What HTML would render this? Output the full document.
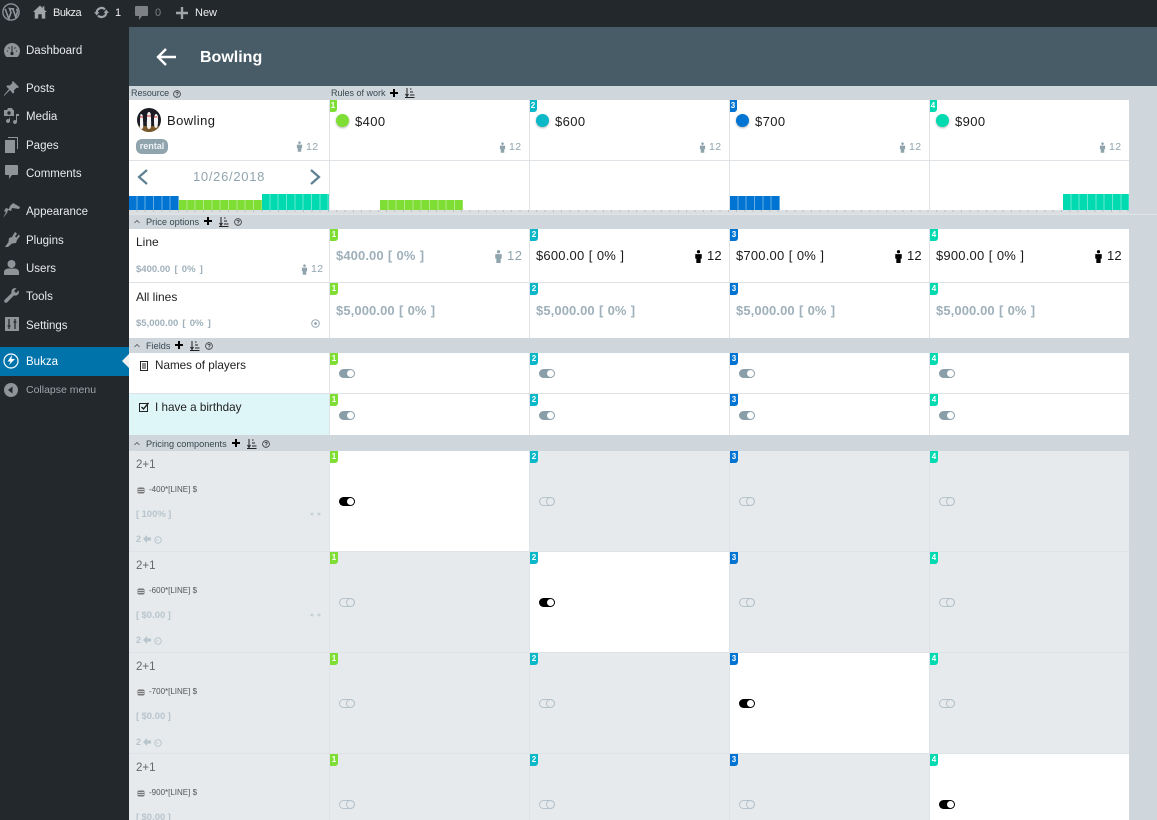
<!DOCTYPE html>
<html style="width:1157px;height:820px;overflow:hidden"><head><meta charset="utf-8"><title>Bowling</title>
<style>
html,body{margin:0;padding:0}
body{width:1157px;height:820px;overflow:hidden;position:relative;background:#cfd7dd;font-family:"Liberation Sans",sans-serif}
#p{left:0;top:0;width:1157px;height:820px;overflow:hidden;background:#cfd7dd}
div,span,svg{position:absolute}
.t{white-space:nowrap;line-height:16px;height:16px}
.w{background:#fff}.g{background:#e6eaed}
.m{color:#e8e9ea;font-size:11.500px;left:26px}
.a{color:#eee;font-size:11px;font-weight:400}
.s{font-size:9px;color:#37474f}
.b{width:8px;height:12px;color:#fff;font-size:8px;font-weight:bold;line-height:12px;text-align:center;border-bottom-right-radius:3px}
.c1{background:#7ede34}.c2{background:#0bb8c8}.c3{background:#0074d2}.c4{background:#00dab0}
.dot{width:13px;height:13px;border-radius:50%;box-shadow:0 1px 2px rgba(0,0,0,.3)}
.r{font-size:13px;color:#1a1a1a;letter-spacing:.4px}
.n{font-size:10.500px;color:#90a4ae;letter-spacing:.4px}
.pb{font-size:13px;font-weight:bold;color:#9fb0ba;letter-spacing:.1px;word-spacing:.5px}
.pk{font-size:13px;color:#1a1a1a;letter-spacing:.2px;word-spacing:.5px}
.vl{width:1px;background:#dfe3e7}
.hl{height:1px;background:#dfe3e7;left:129px;width:1000px}
.tog{width:16px;height:9px;border-radius:5px;background:#8a9ea9}
.tog:after{content:"";position:absolute;right:1px;top:1px;width:7px;height:7px;border-radius:50%;background:#fff}
.tb{background:#000}
.to{width:16px;height:9px;border-radius:5px;border:1px solid #b6c3ca;box-sizing:border-box}
.to:after{content:"";position:absolute;right:-1px;top:-1px;width:9px;height:9px;border-radius:50%;border:1px solid #b6c3ca;box-sizing:border-box}
.ch{background-image:repeating-linear-gradient(90deg,transparent 0,transparent 7.330px,rgba(255,255,255,.4) 7.330px,rgba(255,255,255,.4) 8.330px)}
.tick{left:129px;width:1000px;top:210px;height:4px;background-color:#dcdfe2;background-image:repeating-linear-gradient(90deg,transparent 0,transparent 7.330px,#b9bfc4 7.330px,#b9bfc4 8.330px);background-size:100% 2px;background-repeat:no-repeat}
.d2{font-size:8px;color:#555}
.pc{font-size:9.500px;font-weight:bold;color:#b8c5cc;word-spacing:-.3px}
.h{font-size:11.500px;color:#666}
</style></head><body><div id="p">
<svg width="0" height="0" style="left:0;top:0"><defs>
<symbol id="per" viewBox="0 0 8 12"><circle cx="4" cy="1.600" r="1.500"/><path d="M1 3.800h6v4.200H6V12H2V8H1z"/></symbol>
<symbol id="plus" viewBox="0 0 8 8"><path d="M3 0h2v3h3v2H5v3H3V5H0V3h3z"/></symbol>
<symbol id="sort" viewBox="0 0 10 10"><path d="M2 0v7M0.500 6l1.500 2.500L3.500 6M5 1h1.500M5 4h3M5 7h4.500M0 9.500h9.500" fill="none" stroke="#222" stroke-width="1"/></symbol>
<symbol id="q" viewBox="0 0 8 8"><circle cx="4" cy="4" r="3.400" fill="none" stroke="#333" stroke-width=".8"/><path d="M2.900 3.100C3 1.800 5.200 1.900 5.200 3.200 5.200 4 4 4 4 5" fill="none" stroke="#333" stroke-width=".8"/><circle cx="4" cy="6" r=".5" fill="#333"/></symbol>
<symbol id="ll" viewBox="0 0 8 7"><rect x=".5" y=".5" width="7" height="6" rx="1.500" fill="#777"/><path d="M1 2.500h6M1 4.500h6" stroke="#e6eaed" stroke-width=".7"/></symbol>
<symbol id="x" viewBox="0 0 11 6"><path d="M0 3l2.500-2v1.500H4v1H2.500V5zM11 3L8.500 1v1.500H7v1h1.500V5z" fill="#c3ced4"/></symbol>
<symbol id="la" viewBox="0 0 10 10"><path d="M5 0v3h5v4H5v3L0 5z" fill="#b8c5cc"/></symbol>
<symbol id="ck" viewBox="0 0 8 8"><circle cx="4" cy="4" r="3.300" fill="none" stroke="#b8c5cc"/><path d="M2 4h2.500" fill="none" stroke="#b8c5cc" stroke-width=".8"/></symbol>
</defs></svg>

<!-- Admin bar -->
<div style="left:0;top:0;width:1157px;height:27px;background:#23282d"></div>
<svg style="left:2px;top:3px" width="18" height="18" viewBox="0 0 20 20"><circle cx="10" cy="10" r="9" fill="none" stroke="#8f9499" stroke-width="1.500"/><path d="M3.500 6.500l4 11 2.500-7-1.700-4.500h-1M8 6.500h5.500M12 6.500l3.200 9 1.800-5c.7-2-.3-3-1-4" fill="none" stroke="#8f9499" stroke-width="1.800"/></svg>
<svg style="left:33px;top:5px" width="14" height="14" viewBox="0 0 16 15"><path d="M8 0L0 7.500h2V15h4v-5h4v5h4V7.500h2L13 5V1h-2v2z" fill="#a0a5aa"/></svg>
<div class="t a" style="left:53px;top:5px;letter-spacing:-.5px">Bukza</div>
<svg style="left:94px;top:6px" width="15" height="13" viewBox="0 0 17 15"><path d="M3 8a5.500 5.500 0 0 1 9.500-4M14 7a5.500 5.500 0 0 1-9.500 4" fill="none" stroke="#a0a5aa" stroke-width="2.500"/><path d="M0 7h6l-3 4zM17 8h-6l3-4z" fill="#a0a5aa"/></svg>
<div class="t a" style="left:115px;top:5px">1</div>
<svg style="left:135px;top:6px" width="13" height="14" viewBox="0 0 13 14"><path d="M1 0h11a1 1 0 0 1 1 1v8a1 1 0 0 1-1 1H7l-3 4v-4H1a1 1 0 0 1-1-1V1a1 1 0 0 1 1-1z" fill="#7d8185"/></svg>
<div class="t a" style="left:155px;top:5px;color:#7d8185">0</div>
<svg style="left:176px;top:7px" width="12" height="12" viewBox="0 0 12 12"><path d="M4.800 0h2.400v4.800H12v2.400H7.200V12H4.800V7.200H0V4.800h4.800z" fill="#a0a5aa"/></svg>
<div class="t a" style="left:195px;top:5px">New</div>

<!-- Sidebar -->
<div style="left:0;top:27px;width:129px;height:793px;background:#23282d"></div>
<div style="left:0;top:347px;width:129px;height:29px;background:#0073aa"></div>
<div style="left:122px;top:354px;width:0;height:0;border:7px solid transparent;border-left:0;border-right-color:#f1f1f1"></div>
<svg style="left:4px;top:43px" width="16" height="14" viewBox="0 0 16 14"><path d="M8 0a8 8 0 0 0-8 8c0 2.500 1 4.500 2.500 6h11c1.500-1.500 2.500-3.500 2.500-6a8 8 0 0 0-8-8z" fill="#8f9499"/><path d="M8 3v6M3 8h1M12 8h1M4.500 4.500l1 1M11.500 4.500l-1 1" stroke="#23282d"/><circle cx="8" cy="10.500" r="1.600" fill="#23282d"/></svg>
<div class="t m" style="top:43px">Dashboard</div>
<svg style="left:4px;top:81px" width="15" height="15" viewBox="0 0 15 15"><path d="M9 0l6 6-1.500 1-1-.3-2.500 2.500.2 2.300-1.200 1.200L6 9l-5 5-1 1 0-1 5-6L2.300 5.500 3.500 4.300l2.300.2 2.500-2.500L8 1z" fill="#8f9499"/></svg>
<div class="t m" style="top:81px">Posts</div>
<svg style="left:3px;top:108px" width="17" height="16" viewBox="0 0 17 16"><path d="M1 2h3l1-2h4l1 2h1v6H1zM13 6h3v2h-2v6a2 2 0 1 1-1-1.700zM7 11v2a2 2 0 1 1-1-1.700V9" fill="#8f9499"/><circle cx="6" cy="5" r="1.700" fill="#23282d"/></svg>
<div class="t m" style="top:109px">Media</div>
<svg style="left:5px;top:137px" width="13" height="16" viewBox="0 0 13 16"><path d="M3 0h10v12h-1V1H3zM0 3h10v13H0z" fill="#8f9499"/></svg>
<div class="t m" style="top:138px">Pages</div>
<svg style="left:5px;top:165px" width="13" height="14" viewBox="0 0 13 14"><path d="M1 0h11a1 1 0 0 1 1 1v8a1 1 0 0 1-1 1H7l-3 4v-4H1a1 1 0 0 1-1-1V1a1 1 0 0 1 1-1z" fill="#8f9499"/></svg>
<div class="t m" style="top:166px">Comments</div>
<svg style="left:3px;top:203px" width="17" height="15" viewBox="0 0 17 15"><path d="M10 0l7 4-1 2-7-1-1 3-3-1-1 3-4 5 3-6-2-1 2-3 3 1 1-3z" fill="#8f9499"/></svg>
<div class="t m" style="top:204px">Appearance</div>
<svg style="left:4px;top:232px" width="16" height="15" viewBox="0 0 16 15"><path d="M11 0l2 1.500-2 3 1.500 1 2-3L16 4l-3 4-1 3-4 .5L4 15H1l3.500-5 .5-4 3-1z" fill="#8f9499"/></svg>
<div class="t m" style="top:233px">Plugins</div>
<svg style="left:4px;top:260px" width="15" height="15" viewBox="0 0 15 15"><circle cx="7.500" cy="4" r="4" fill="#8f9499"/><path d="M0 15v-3c0-2 2-3.500 4.500-3.500h6c2.500 0 4.500 1.500 4.500 3.500v3z" fill="#8f9499"/></svg>
<div class="t m" style="top:261px">Users</div>
<svg style="left:4px;top:288px" width="15" height="15" viewBox="0 0 15 15"><path d="M14.500 2.500L12 5l-2-2 2.500-2.500C10.500-.5 8 .5 7.500 3c-.2.800 0 1.500.1 2L1 11.500c-1 1-1 2-.3 2.800s1.800.7 2.800-.3L10 7.400c.6.200 1.300.3 2 .1 2.500-.5 3.500-3 2.500-5z" fill="#8f9499"/></svg>
<div class="t m" style="top:289px">Tools</div>
<svg style="left:5px;top:317px" width="14" height="14" viewBox="0 0 14 14"><rect width="14" height="14" fill="#8f9499"/><path d="M4 2v10M10 2v10M2.500 9h3M8.500 5h3" stroke="#23282d" stroke-width="1.300"/></svg>
<div class="t m" style="top:318px">Settings</div>
<svg style="left:3px;top:353px" width="16" height="16" viewBox="0 0 16 16"><circle cx="8" cy="8" r="7" fill="none" stroke="#fff" stroke-width="1.200"/><path d="M9 2L4.500 8.500H7.500L6 12 12 6H8.500z" fill="#fff"/></svg>
<div class="t m" style="top:354px;color:#fff">Bukza</div>
<svg style="left:4px;top:383px" width="14" height="14" viewBox="0 0 14 14"><circle cx="7" cy="7" r="7" fill="#8f9499"/><path d="M8.500 3.500v7L4 7z" fill="#23282d"/></svg>
<div class="t" style="left:26px;top:382px;font-size:10.500px;color:#a0a5aa">Collapse menu</div>

<!-- Header -->
<div style="left:129px;top:27px;width:1028px;height:59px;background:#485c67"></div>
<svg style="left:156px;top:47px" width="21" height="20" viewBox="0 0 21 20"><path d="M20 10H2M10 2l-8 8 8 8" fill="none" stroke="#fff" stroke-width="2.400"/></svg>
<div class="t" style="left:200px;top:50px;font-size:16px;font-weight:bold;color:#fff">Bowling</div>

<!-- section head -->
<div class="t s" style="left:131px;top:85px;letter-spacing:-.05px">Resource</div>
<svg style="left:173px;top:90px" width="8" height="8"><use href="#q"/></svg>
<div class="t s" style="left:331px;top:85px">Rules of work</div>
<svg style="left:390px;top:89px" width="8" height="8"><use href="#plus"/></svg>
<svg style="left:405px;top:88px" width="10" height="10"><use href="#sort"/></svg>

<!-- Resource rows -->
<div class="w" style="left:129px;top:100px;width:1000px;height:110px"></div>
<div class="hl" style="top:160px"></div>
<svg style="left:137px;top:108px" width="24" height="24" viewBox="0 0 24 24"><defs><clipPath id="av"><circle cx="12" cy="12" r="12"/></clipPath></defs><g clip-path="url(#av)"><rect width="24" height="24" fill="#1b1c24"/><rect y="18" width="24" height="6" fill="#7a5a2c"/><path d="M4 6c2 0 2 3 2 6s1 8-1 9-2 0-2-4 0-11 1-11zM12 4c2 0 2 4 2 7s1 10-2 10-2-7-2-10 0-7 2-7zM19 6c2 0 2 3 2 6s0 8-2 8-2-4-2-8 1-6 2-6z" fill="#f4f4f4"/><path d="M10 8h4M3 9h3M17 9h3" stroke="#c33" stroke-width="1"/></g></svg>
<div class="t r" style="left:167px;top:113px">Bowling</div>
<div class="t" style="left:136px;top:139px;width:32px;height:15px;line-height:15px;border-radius:6px;background:#90a4ae;color:#eef2f4;font-size:9px;font-weight:bold;text-align:center">rental</div>
<svg style="left:296px;top:141px;fill:#90a4ae" width="7" height="11"><use href="#per"/></svg>
<div class="t n" style="left:306px;top:139px">12</div>
<svg style="left:136px;top:168px" width="14" height="18" viewBox="0 0 14 18"><path d="M11 2L3 9l8 7" fill="none" stroke="#5f7f92" stroke-width="2.200"/></svg>
<svg style="left:308px;top:168px" width="14" height="18" viewBox="0 0 14 18"><path d="M3 2l8 7-8 7" fill="none" stroke="#5f7f92" stroke-width="2.200"/></svg>
<div class="t" style="left:193px;top:169px;font-size:13px;color:#90a4ae;letter-spacing:.7px">10/26/2018</div>

<div class="ch c3" style="left:129px;top:196px;width:50px;height:14px"></div>
<div class="ch c1" style="left:179px;top:200px;width:83px;height:10px"></div>
<div class="ch c4" style="left:262px;top:194px;width:67px;height:16px"></div>
<div class="ch c1" style="left:380px;top:200px;width:83px;height:10px"></div>
<div class="ch c3" style="left:730px;top:196px;width:50px;height:14px"></div>
<div class="ch c4" style="left:1063px;top:194px;width:66px;height:16px"></div>
<div class="tick"></div>
<div style="left:129px;top:214px;width:1028px;height:1px;background:#dde3e7"></div>

<!-- rule heads -->
<div class="b c1" style="left:329px;top:100px">1</div>
<div class="b c2" style="left:529px;top:100px">2</div>
<div class="b c3" style="left:729px;top:100px">3</div>
<div class="b c4" style="left:929px;top:100px">4</div>
<div class="dot c1" style="left:336px;top:114px"></div><div class="t r" style="left:355px;top:114px">$400</div>
<div class="dot c2" style="left:536px;top:114px"></div><div class="t r" style="left:555px;top:114px">$600</div>
<div class="dot c3" style="left:736px;top:114px"></div><div class="t r" style="left:755px;top:114px">$700</div>
<div class="dot c4" style="left:936px;top:114px"></div><div class="t r" style="left:955px;top:114px">$900</div>
<svg style="left:499px;top:142px;fill:#90a4ae" width="7" height="11"><use href="#per"/></svg><div class="t n" style="left:509px;top:139px">12</div>
<svg style="left:699px;top:142px;fill:#90a4ae" width="7" height="11"><use href="#per"/></svg><div class="t n" style="left:709px;top:139px">12</div>
<svg style="left:899px;top:142px;fill:#90a4ae" width="7" height="11"><use href="#per"/></svg><div class="t n" style="left:909px;top:139px">12</div>
<svg style="left:1099px;top:142px;fill:#90a4ae" width="7" height="11"><use href="#per"/></svg><div class="t n" style="left:1109px;top:139px">12</div>

<!-- Price options -->
<svg style="left:134px;top:219px" width="6" height="5" viewBox="0 0 6 5"><path d="M.5 4L3 1.500 5.500 4" fill="none" stroke="#555" stroke-width=".8"/></svg>
<div class="t s" style="left:146px;top:214px;font-size:9.200px">Price options</div>
<svg style="left:204px;top:217px" width="8" height="8"><use href="#plus"/></svg>
<svg style="left:219px;top:217px" width="10" height="10"><use href="#sort"/></svg>
<svg style="left:234px;top:218px" width="8" height="8"><use href="#q"/></svg>

<div class="w" style="left:129px;top:229px;width:1000px;height:109px"></div>
<div class="hl" style="top:282px"></div>
<div class="t" style="left:136px;top:234px;font-size:12px;color:#222">Line</div>
<div class="t" style="left:136px;top:262px;font-size:9.500px;font-weight:bold;color:#9fb0ba;word-spacing:1.500px">$400.00 [ 0% ]</div>
<svg style="left:301px;top:264px;fill:#90a4ae" width="7" height="11"><use href="#per"/></svg>
<div class="t n" style="left:311px;top:261px">12</div>
<div class="t" style="left:136px;top:289px;font-size:12px;color:#222">All lines</div>
<div class="t" style="left:136px;top:316px;font-size:9.500px;font-weight:bold;color:#9fb0ba;word-spacing:1.500px">$5,000.00 [ 0% ]</div>
<svg style="left:311px;top:319px" width="9" height="9" viewBox="0 0 9 9"><circle cx="4.500" cy="4.500" r="3.800" fill="none" stroke="#90a4ae"/><circle cx="4.500" cy="4.500" r="1.400" fill="#90a4ae"/></svg>

<div class="b c1" style="left:330px;top:229px">1</div><div class="b c2" style="left:530px;top:229px">2</div><div class="b c3" style="left:730px;top:229px">3</div><div class="b c4" style="left:930px;top:229px">4</div>
<div class="t pb" style="left:336px;top:248px">$400.00 [ 0% ]</div>
<svg style="left:494px;top:250px;fill:#90a4ae" width="9" height="13"><use href="#per"/></svg><div class="t" style="left:507px;top:248px;font-size:13px;color:#90a4ae;letter-spacing:.5px">12</div>
<div class="t pk" style="left:536px;top:248px">$600.00 [ 0% ]</div>
<svg style="left:694px;top:250px" width="9" height="13"><use href="#per"/></svg><div class="t pk" style="left:707px;top:248px">12</div>
<div class="t pk" style="left:736px;top:248px">$700.00 [ 0% ]</div>
<svg style="left:894px;top:250px" width="9" height="13"><use href="#per"/></svg><div class="t pk" style="left:907px;top:248px">12</div>
<div class="t pk" style="left:936px;top:248px">$900.00 [ 0% ]</div>
<svg style="left:1094px;top:250px" width="9" height="13"><use href="#per"/></svg><div class="t pk" style="left:1107px;top:248px">12</div>

<div class="b c1" style="left:330px;top:283px">1</div><div class="b c2" style="left:530px;top:283px">2</div><div class="b c3" style="left:730px;top:283px">3</div><div class="b c4" style="left:930px;top:283px">4</div>
<div class="t pb" style="left:336px;top:303px">$5,000.00 [ 0% ]</div>
<div class="t pb" style="left:536px;top:303px">$5,000.00 [ 0% ]</div>
<div class="t pb" style="left:736px;top:303px">$5,000.00 [ 0% ]</div>
<div class="t pb" style="left:936px;top:303px">$5,000.00 [ 0% ]</div>

<!-- Fields -->
<svg style="left:134px;top:343px" width="6" height="5" viewBox="0 0 6 5"><path d="M.5 4L3 1.500 5.500 4" fill="none" stroke="#555" stroke-width=".8"/></svg>
<div class="t s" style="left:146px;top:338px;font-size:9.200px">Fields</div>
<svg style="left:175px;top:341px" width="8" height="8"><use href="#plus"/></svg>
<svg style="left:190px;top:341px" width="10" height="10"><use href="#sort"/></svg>
<svg style="left:205px;top:342px" width="8" height="8"><use href="#q"/></svg>

<div class="w" style="left:129px;top:353px;width:1000px;height:82px"></div>
<div class="hl" style="top:393px"></div>
<div style="left:129px;top:394px;width:200px;height:41px;background:#dff6f9"></div>
<svg style="left:140px;top:361px" width="8" height="10" viewBox="0 0 8 10"><rect x=".5" y=".5" width="7" height="9" fill="none" stroke="#222"/><path d="M2 3h4M2 5h4M2 7h4" stroke="#222"/></svg>
<div class="t" style="left:155px;top:358px;font-size:11.700px;color:#222">Names of players</div>
<svg style="left:139px;top:402px" width="10" height="10" viewBox="0 0 10 10"><rect x=".5" y="1.500" width="8" height="8" fill="none" stroke="#222"/><path d="M2.500 5l2 2L9.500 1" fill="none" stroke="#222" stroke-width="1.400"/></svg>
<div class="t" style="left:155px;top:400px;font-size:11.700px;color:#222">I have a birthday</div>
<div class="b c1" style="left:330px;top:353px">1</div><div class="b c2" style="left:530px;top:353px">2</div><div class="b c3" style="left:730px;top:353px">3</div><div class="b c4" style="left:930px;top:353px">4</div>
<div class="b c1" style="left:330px;top:394px">1</div><div class="b c2" style="left:530px;top:394px">2</div><div class="b c3" style="left:730px;top:394px">3</div><div class="b c4" style="left:930px;top:394px">4</div>
<div class="tog" style="left:339px;top:369px"></div><div class="tog" style="left:539px;top:369px"></div><div class="tog" style="left:739px;top:369px"></div><div class="tog" style="left:939px;top:369px"></div>
<div class="tog" style="left:339px;top:411px"></div><div class="tog" style="left:539px;top:411px"></div><div class="tog" style="left:739px;top:411px"></div><div class="tog" style="left:939px;top:411px"></div>

<!-- Pricing -->
<svg style="left:134px;top:441px" width="6" height="5" viewBox="0 0 6 5"><path d="M.5 4L3 1.500 5.500 4" fill="none" stroke="#555" stroke-width=".8"/></svg>
<div class="t s" style="left:146px;top:436px;font-size:9.200px">Pricing components</div>
<svg style="left:232px;top:439px" width="8" height="8"><use href="#plus"/></svg>
<svg style="left:247px;top:439px" width="10" height="10"><use href="#sort"/></svg>
<svg style="left:262px;top:440px" width="8" height="8"><use href="#q"/></svg>

<div class="g" style="left:129px;top:451px;width:1000px;height:369px"></div>
<div class="w" style="left:330px;top:451px;width:199px;height:100px"></div>
<div class="w" style="left:530px;top:552px;width:199px;height:100px"></div>
<div class="w" style="left:730px;top:653px;width:199px;height:100px"></div>
<div class="w" style="left:930px;top:754px;width:199px;height:66px"></div>
<div class="hl" style="top:551px"></div><div class="hl" style="top:652px"></div><div class="hl" style="top:753px"></div>

<div class="t h" style="left:136px;top:457px">2+1</div>
<svg style="left:137px;top:487px" width="8" height="7"><use href="#ll"/></svg>
<div class="t d2" style="left:149px;top:482px">-400*[LINE] $</div>
<div class="t pc" style="left:136px;top:507px">[ 100% ]</div>
<svg style="left:310px;top:511px" width="11" height="6"><use href="#x"/></svg>
<div class="t pc" style="left:136px;top:531px;font-size:9px">2</div>
<svg style="left:143px;top:535px" width="8" height="8"><use href="#la"/></svg>
<svg style="left:154px;top:536px" width="8" height="8"><use href="#ck"/></svg>

<div class="t h" style="left:136px;top:558px">2+1</div>
<svg style="left:137px;top:588px" width="8" height="7"><use href="#ll"/></svg>
<div class="t d2" style="left:149px;top:583px">-600*[LINE] $</div>
<div class="t pc" style="left:136px;top:608px">[ $0.00 ]</div>
<svg style="left:310px;top:612px" width="11" height="6"><use href="#x"/></svg>
<div class="t pc" style="left:136px;top:632px;font-size:9px">2</div>
<svg style="left:143px;top:636px" width="8" height="8"><use href="#la"/></svg>
<svg style="left:154px;top:637px" width="8" height="8"><use href="#ck"/></svg>

<div class="t h" style="left:136px;top:659px">2+1</div>
<svg style="left:137px;top:689px" width="8" height="7"><use href="#ll"/></svg>
<div class="t d2" style="left:149px;top:684px">-700*[LINE] $</div>
<div class="t pc" style="left:136px;top:709px">[ $0.00 ]</div>
<div class="t pc" style="left:136px;top:734px;font-size:9px">2</div>
<svg style="left:143px;top:738px" width="8" height="8"><use href="#la"/></svg>
<svg style="left:154px;top:739px" width="8" height="8"><use href="#ck"/></svg>

<div class="t h" style="left:136px;top:760px">2+1</div>
<svg style="left:137px;top:790px" width="8" height="7"><use href="#ll"/></svg>
<div class="t d2" style="left:149px;top:785px">-900*[LINE] $</div>
<div class="t pc" style="left:136px;top:810px">[ $0.00 ]</div>

<div class="b c1" style="left:330px;top:451px">1</div><div class="b c2" style="left:530px;top:451px">2</div><div class="b c3" style="left:730px;top:451px">3</div><div class="b c4" style="left:930px;top:451px">4</div>
<div class="b c1" style="left:330px;top:552px">1</div><div class="b c2" style="left:530px;top:552px">2</div><div class="b c3" style="left:730px;top:552px">3</div><div class="b c4" style="left:930px;top:552px">4</div>
<div class="b c1" style="left:330px;top:653px">1</div><div class="b c2" style="left:530px;top:653px">2</div><div class="b c3" style="left:730px;top:653px">3</div><div class="b c4" style="left:930px;top:653px">4</div>
<div class="b c1" style="left:330px;top:754px">1</div><div class="b c2" style="left:530px;top:754px">2</div><div class="b c3" style="left:730px;top:754px">3</div><div class="b c4" style="left:930px;top:754px">4</div>

<div class="tog tb" style="left:339px;top:497px"></div>
<div class="to" style="left:539px;top:497px"></div>
<div class="to" style="left:739px;top:497px"></div>
<div class="to" style="left:939px;top:497px"></div>

<div class="to" style="left:339px;top:598px"></div>
<div class="tog tb" style="left:539px;top:598px"></div>
<div class="to" style="left:739px;top:598px"></div>
<div class="to" style="left:939px;top:598px"></div>

<div class="to" style="left:339px;top:699px"></div>
<div class="to" style="left:539px;top:699px"></div>
<div class="tog tb" style="left:739px;top:699px"></div>
<div class="to" style="left:939px;top:699px"></div>

<div class="to" style="left:339px;top:800px"></div>
<div class="to" style="left:539px;top:800px"></div>
<div class="to" style="left:739px;top:800px"></div>
<div class="tog tb" style="left:939px;top:800px"></div>

<!-- Vertical dividers -->
<div class="vl" style="left:329px;top:100px;height:110px"></div><div class="vl" style="left:529px;top:100px;height:110px"></div><div class="vl" style="left:729px;top:100px;height:110px"></div><div class="vl" style="left:929px;top:100px;height:110px"></div>
<div class="vl" style="left:329px;top:229px;height:109px"></div><div class="vl" style="left:529px;top:229px;height:109px"></div><div class="vl" style="left:729px;top:229px;height:109px"></div><div class="vl" style="left:929px;top:229px;height:109px"></div>
<div class="vl" style="left:329px;top:353px;height:82px"></div><div class="vl" style="left:529px;top:353px;height:82px"></div><div class="vl" style="left:729px;top:353px;height:82px"></div><div class="vl" style="left:929px;top:353px;height:82px"></div>
<div class="vl" style="left:329px;top:451px;height:369px"></div><div class="vl" style="left:529px;top:451px;height:369px"></div><div class="vl" style="left:729px;top:451px;height:369px"></div><div class="vl" style="left:929px;top:451px;height:369px"></div>
</div></body></html>
